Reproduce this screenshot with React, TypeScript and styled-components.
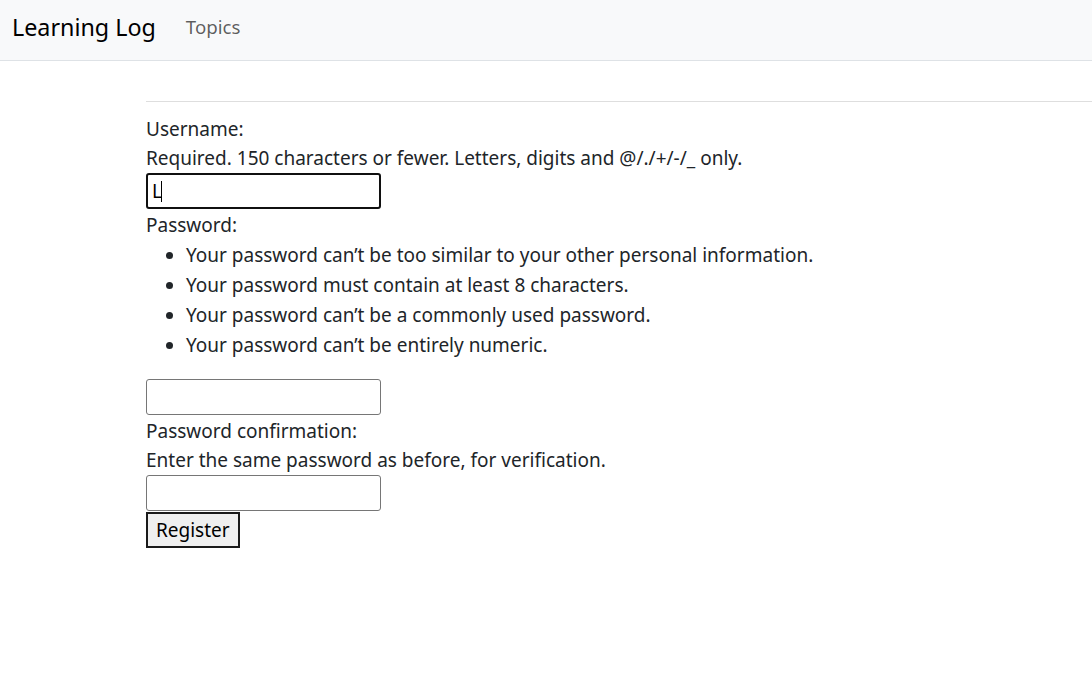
import React from 'react';
import styled, { createGlobalStyle } from 'styled-components';

const GlobalStyle = createGlobalStyle`
  html, body {
    margin: 0;
    padding: 0;
    background: #ffffff;
  }
  body {
    font-family: "Noto Sans", "Open Sans", Arial, sans-serif;
    font-size: 19px;
    line-height: 30px;
    color: #212529;
  }
`;

const Navbar = styled.nav`
  display: flex;
  align-items: center;
  height: 60px;
  padding: 0 12px;
  background: #f8f9fa;
  border-bottom: 1px solid #dee2e6;
`;

const Brand = styled.a`
  font-size: 23.3px;
  line-height: 30px;
  color: #000000;
  text-decoration: none;
  margin-right: 30px;
  margin-top: -7px;
`;

const NavLink = styled.a`
  font-size: 18.7px;
  color: rgba(0, 0, 0, 0.64);
  text-decoration: none;
  margin-top: -7px;
`;

const Main = styled.main`
  padding: 40px 0 0 146px;
`;

const Rule = styled.hr`
  margin: 0 0 11px;
  border: 0;
  border-top: 1px solid #dedede;
`;

const Form = styled.form`
  display: flex;
  flex-direction: column;
  align-items: flex-start;
`;

const Label = styled.label`
  display: block;
  padding-top: 1px;
  margin-bottom: -1px;
`;

const Help = styled.span`
  display: block;
`;

const Field = styled.div`
  position: relative;
`;

const Input = styled.input<{ $focused?: boolean }>`
  box-sizing: border-box;
  width: 235px;
  height: 36px;
  margin: 0;
  padding: 0 4px;
  font-family: "Noto Sans", Arial, sans-serif;
  font-size: 19px;
  color: #000;
  background: #fff;
  border-radius: 3px;
  border: ${(p) => (p.$focused ? '2px solid #101010' : '1px solid #767676')};
  outline: none;
  caret-color: transparent;
`;

const Caret = styled.span`
  position: absolute;
  left: 15px;
  top: 8px;
  width: 1px;
  height: 21px;
  background: #000;
`;

const Rules = styled.ul`
  margin: 0 0 20px;
  padding-left: 40px;
  li {
    padding-top: 1px;
    margin-bottom: -1px;
  }
`;

const Button = styled.button`
  box-sizing: border-box;
  height: 36px;
  margin-top: 1px;
  padding: 0 8px;
  font-family: "Noto Sans", Arial, sans-serif;
  font-size: 19px;
  color: #000;
  background: #efefef;
  border: 2px solid #1a1a1a;
  border-radius: 0;
`;

const rules = [
  'Your password can’t be too similar to your other personal information.',
  'Your password must contain at least 8 characters.',
  'Your password can’t be a commonly used password.',
  'Your password can’t be entirely numeric.',
];

const App: React.FC = () => (
  <>
    <GlobalStyle />
    <Navbar>
      <Brand href="#">Learning Log</Brand>
      <NavLink href="#">Topics</NavLink>
    </Navbar>
    <Main>
      <Rule />
      <Form onSubmit={(e) => e.preventDefault()}>
        <Label htmlFor="username">Username:</Label>
        <Help>Required. 150 characters or fewer. Letters, digits and @/./+/-/_ only.</Help>
        <Field>
          <Input id="username" type="text" defaultValue="L" $focused />
          <Caret />
        </Field>
        <Label htmlFor="password1">Password:</Label>
        <Rules>
          {rules.map((r) => (
            <li key={r}>{r}</li>
          ))}
        </Rules>
        <Input id="password1" type="password" />
        <Label htmlFor="password2">Password confirmation:</Label>
        <Help>Enter the same password as before, for verification.</Help>
        <Input id="password2" type="password" />
        <Button type="submit">Register</Button>
      </Form>
    </Main>
  </>
);

export default App;
